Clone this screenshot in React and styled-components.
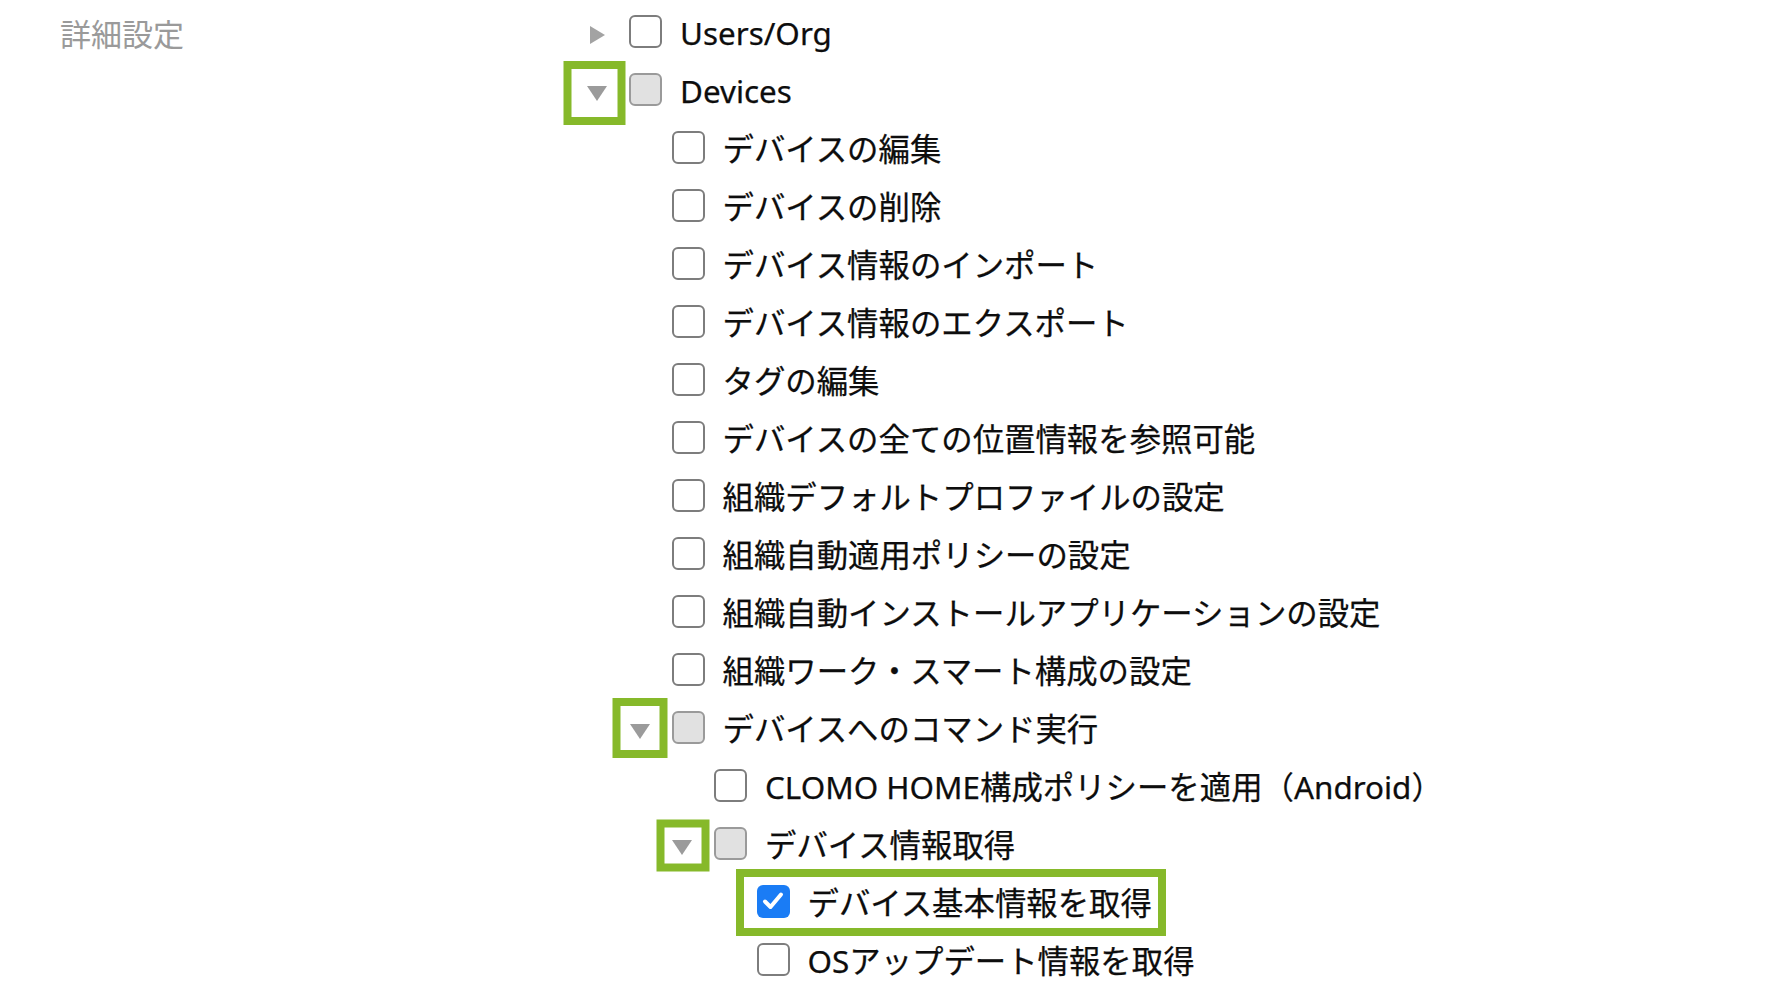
import React from 'react'
import styled, { createGlobalStyle, css } from 'styled-components'

const GlobalStyle = createGlobalStyle`
    html, body {
        margin: 0;
        padding: 0;
        background: #ffffff;
    }
    body {
        font-family: "Noto Sans", "Noto Sans CJK JP", sans-serif;
        color: #111111;
    }
`

const Page = styled.div`
    display: flex;
    align-items: flex-start;
    padding-top: 2px;
`

const SideLabel = styled.div`
    flex: 0 0 586.5px;
    box-sizing: border-box;
    padding-left: 60px;
    padding-top: 2px;
    height: 58px;
    line-height: 58px;
    font-size: 31px;
    color: #9a9a9a;
    font-family: "Noto Sans CJK JP", sans-serif;
`

const Tree = styled.div`
    display: flex;
    flex-direction: column;
`

const Children = styled.div`
    display: flex;
    flex-direction: column;
    padding-left: 42.5px;
`

const Row = styled.div`
    display: flex;
    align-items: center;
    height: 58px;
`

const ToggleSlot = styled.div`
    flex: 0 0 42.5px;
    align-self: stretch;
    display: flex;
    align-items: center;
`

const Arrow = styled.span`
    position: relative;
    width: 21px;
    height: 21px;
    margin-top: 8px;
    display: flex;
    align-items: center;
    justify-content: center;

    &::before {
        content: '';
        width: 0;
        height: 0;
        ${({ $open }) => $open ? css`
            border-left: 10px solid transparent;
            border-right: 10px solid transparent;
            border-top: 15px solid #9b9b9b;
        ` : css`
            border-top: 9px solid transparent;
            border-bottom: 9px solid transparent;
            border-left: 15px solid #a3a3a3;
        `}
    }
`

/* annotation frame drawn over the arrow */
const Frame = styled.span`
    position: absolute;
    left: 50%;
    top: 50%;
    width: ${({ $w }) => $w}px;
    height: ${({ $h }) => $h}px;
    box-sizing: border-box;
    border: 8px solid #86b92a;
    transform: translate(calc(-50% + ${({ $dx }) => $dx || 0}px), calc(-50% + ${({ $dy }) => $dy || 0}px));
`

const Box = styled.span`
    flex: 0 0 33px;
    width: 33px;
    height: 33px;
    box-sizing: border-box;
    border-radius: 6px;
    display: flex;
    align-items: center;
    justify-content: center;
    ${({ $state }) => {
        if ($state === 'checked') return css`
            background: #1a7cf5;
            border: none;
        `
        if ($state === 'mixed') return css`
            background: #e1e1e1;
            border: 2px solid #9a9a9a;
        `
        return css`
            background: #ffffff;
            border: 2px solid #7d7d7d;
        `
    }}
`

const Label = styled.span`
    margin-left: 18px;
    margin-top: 3px;
    font-size: 31.4px;
    line-height: 58px;
    white-space: nowrap;
    color: #0d0d0d;
    -webkit-text-stroke: 0.25px #0d0d0d;
`

const Highlight = styled.div`
    position: relative;
    display: flex;
    align-items: center;
    align-self: stretch;

    &::after {
        content: '';
        position: absolute;
        left: -21px;
        right: -14px;
        top: -3px;
        bottom: -6px;
        border: 8px solid #86b92a;
        pointer-events: none;
    }
`

const Check = () => (
    <svg width="22" height="20" viewBox="0 0 22 20">
        <path d="M3 10.5 L8.5 16 L19 3.5" fill="none" stroke="#ffffff" strokeWidth="4" strokeLinecap="round" strokeLinejoin="round" />
    </svg>
)

const tree = [
    { label: 'Users/Org', open: false, children: [] , state: 'empty' },
    {
        label: 'Devices', open: true, state: 'mixed', frame: { w: 62, h: 64, dx: -2.5, dy: 0 },
        children: [
            { label: 'デバイスの編集' },
            { label: 'デバイスの削除' },
            { label: 'デバイス情報のインポート' },
            { label: 'デバイス情報のエクスポート' },
            { label: 'タグの編集' },
            { label: 'デバイスの全ての位置情報を参照可能' },
            { label: '組織デフォルトプロファイルの設定' },
            { label: '組織自動適用ポリシーの設定' },
            { label: '組織自動インストールアプリケーションの設定' },
            { label: '組織ワーク・スマート構成の設定' },
            {
                label: 'デバイスへのコマンド実行', open: true, state: 'mixed', frame: { w: 55, h: 60, dx: 0, dy: -3 },
                children: [
                    { label: 'CLOMO HOME構成ポリシーを適用（Android）' },
                    {
                        label: 'デバイス情報取得', open: true, state: 'mixed', frame: { w: 53, h: 52, dx: 1, dy: -1.5 },
                        children: [
                            { label: 'デバイス基本情報を取得', state: 'checked', highlight: true },
                            { label: 'OSアップデート情報を取得' },
                        ],
                    },
                ],
            },
        ],
    },
]

const Node = ({ node }) => {
    const hasChildren = node.children !== undefined
    const content = (
        <>
            <Box $state={node.state || 'empty'}>
                {node.state === 'checked' && <Check />}
            </Box>
            <Label>{node.label}</Label>
        </>
    )
    return (
        <>
            <Row>
                <ToggleSlot>
                    {hasChildren && (
                        <Arrow $open={node.open}>
                            {node.frame && <Frame $w={node.frame.w} $h={node.frame.h} $dx={node.frame.dx} $dy={node.frame.dy} />}
                        </Arrow>
                    )}
                </ToggleSlot>
                {node.highlight ? <Highlight>{content}</Highlight> : content}
            </Row>
            {hasChildren && node.open && node.children.length > 0 && (
                <Children>
                    {node.children.map((child) => <Node key={child.label} node={child} />)}
                </Children>
            )}
        </>
    )
}

const App = () => {
    return (
        <>
            <GlobalStyle />
            <Page>
                <SideLabel>詳細設定</SideLabel>
                <Tree>
                    {tree.map((node) => <Node key={node.label} node={node} />)}
                </Tree>
            </Page>
        </>
    )
}

export default App
